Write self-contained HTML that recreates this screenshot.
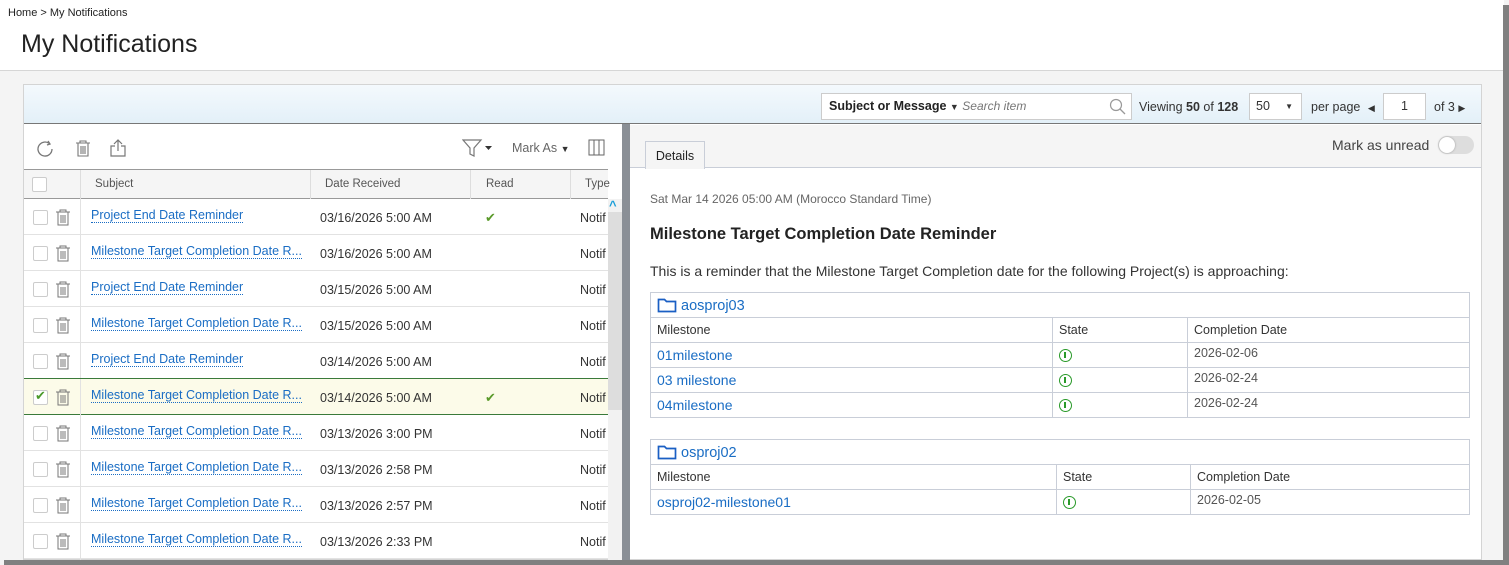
<!DOCTYPE html>
<html><head><meta charset="utf-8"><style>
*{box-sizing:border-box;margin:0;padding:0}
body{width:1509px;height:565px;overflow:hidden;background:#f4f4f4;font-family:"Liberation Sans",sans-serif;color:#333;position:relative}
.a{position:absolute}
.lk{color:#1a6dc4}
.sub{color:#1a6dc4;font-size:12.5px;border-bottom:1px dotted #1a6dc4;line-height:14px;white-space:nowrap}
.cb{width:15px;height:15px;border:1px solid #ccc;border-radius:2px;background:#fff}
.row{position:absolute;left:24px;width:584px;height:36px;border-bottom:1px solid #e2e2e2;background:#fff}
.dt{font-size:12.5px;color:#333}
table{border-collapse:collapse;position:absolute;font-size:12.5px}
td{border:1px solid #c9ced8;padding:0 6px;height:25px}
.ok{display:inline-block;width:13px;height:13px;border:1.5px solid #2a9a2a;border-radius:50%;position:relative;vertical-align:middle}
.ok:after{content:"";position:absolute;left:4px;top:2px;width:1.6px;height:6px;background:#2a9a2a}
</style></head><body>
<div class="a" style="left:0;top:0;width:1504px;height:71px;background:#fff;border-bottom:1px solid #d6d6d6"></div>
<div class="a" style="left:8px;top:7px;font-size:11px;color:#222">Home &gt; My Notifications</div>
<div class="a" style="left:21px;top:30px;font-size:25px;color:#222">My Notifications</div>
<div class="a" style="left:1503px;top:5px;width:6px;height:560px;background:#808080"></div>
<div class="a" style="left:4px;top:560px;width:1505px;height:5px;background:#808080"></div>
<div class="a" style="left:23px;top:84px;width:1459px;height:476px;border:1px solid #d4d4d4;background:#fff"></div>
<div class="a" style="left:24px;top:85px;width:1457px;height:39px;background:linear-gradient(#f4f9fd,#e3f0f8);border-bottom:1px solid #777"></div>
<div class="a" style="left:821px;top:93px;width:311px;height:27px;border:1px solid #ccc;background:#fff;font-size:12.5px;line-height:25px;padding-left:7px"><b style="font-weight:bold;color:#222">Subject or Message</b> <span style="font-size:9px">▼</span> <i style="color:#777;font-size:12px">Search item</i>
<svg class="a" style="right:4px;top:4px" width="18" height="18"><circle cx="7" cy="7" r="5.5" fill="none" stroke="#999" stroke-width="1.2"/><line x1="11" y1="11" x2="16" y2="16" stroke="#999" stroke-width="1.3"/></svg></div>
<div class="a" style="left:1139px;top:100px;font-size:12.5px">Viewing <b>50</b> of <b>128</b></div>
<div class="a" style="left:1249px;top:93px;width:53px;height:27px;border:1px solid #ccc;background:#fff;font-size:12.5px;line-height:25px;padding-left:6px">50<span class="a" style="right:8px;top:0;font-size:8px">▼</span></div>
<div class="a" style="left:1311px;top:100px;font-size:12.5px">per page <span style="font-size:9px;margin-left:4px">◀</span></div>
<div class="a" style="left:1383px;top:93px;width:43px;height:27px;border:1px solid #ccc;background:#fff;font-size:12.5px;line-height:25px;text-align:center">1</div>
<div class="a" style="left:1434px;top:100px;font-size:12.5px">of 3 <span style="font-size:9px">▶</span></div>
<svg class="a" style="left:35px;top:138px" width="22" height="22"><path d="M17 11a7 7 0 1 1-3-5.7" fill="none" stroke="#777" stroke-width="1.3"/><path d="M13 3l2 3-3 1" fill="none" stroke="#777" stroke-width="1.3"/></svg>
<svg class="a" style="left:74px;top:138px" width="18" height="20"><path d="M2 5h14M6 5V3h6v2M4 5v13h10V5M7 8v8M9 8v8M11 8v8" fill="none" stroke="#777" stroke-width="1.1"/></svg>
<svg class="a" style="left:108px;top:137px" width="20" height="22"><path d="M7 9H3v10h14V9h-4M10 14V3M6 7l4-4 4 4" fill="none" stroke="#777" stroke-width="1.2"/></svg>
<svg class="a" style="left:462px;top:138px" width="34" height="20"><path d="M1 2h18l-7 8v8l-4-2v-6z" fill="none" stroke="#777" stroke-width="1.2"/><path d="M23 8h7l-3.5 4z" fill="#333"/></svg>
<div class="a" style="left:512px;top:141px;font-size:12.5px;color:#666">Mark As <span style="font-size:9px;color:#333">▼</span></div>
<svg class="a" style="left:588px;top:139px" width="18" height="18"><rect x="1" y="1" width="15" height="15" fill="none" stroke="#666"/><path d="M6 1v15M11 1v15" stroke="#666"/></svg>
<div class="a" style="left:24px;top:169px;width:584px;height:30px;background:#f5f5f5;border-top:1px solid #999;border-bottom:1px solid #999;font-size:11.5px;color:#555">
<div class="cb a" style="left:8px;top:7px"></div>
<div class="a" style="left:56px;top:0;height:29px;border-left:1px solid #ddd"></div>
<div class="a" style="left:71px;top:8px">Subject</div>
<div class="a" style="left:286px;top:0;height:29px;border-left:1px solid #ddd"></div>
<div class="a" style="left:301px;top:8px">Date Received</div>
<div class="a" style="left:446px;top:0;height:29px;border-left:1px solid #ddd"></div>
<div class="a" style="left:462px;top:8px">Read</div>
<div class="a" style="left:546px;top:0;height:29px;border-left:1px solid #ddd"></div>
<div class="a" style="left:561px;top:8px">Type</div>
</div>
<div class="a" style="left:608px;top:199px;width:14px;height:361px;background:#f2f2f2"></div>
<div class="a" style="left:608px;top:212px;width:14px;height:198px;background:#ddd"></div>
<div class="a" style="left:609px;top:198px;font-size:13px;color:#1a9ed8;font-weight:bold">^</div>
<div class="a" style="left:622px;top:124px;width:8px;height:436px;background:#8a8f96"></div>
<div class="a" style="left:80px;top:199px;width:1px;height:361px;background:#e2e2e2"></div>
<div id="rows"></div>
<div class="a" style="left:630px;top:125px;width:851px;height:43px;background:#f5f5f5;border-bottom:1px solid #c9ced8"></div>
<div class="a" style="left:645px;top:141px;width:60px;height:28px;background:#f5f5f5;border:1px solid #c9ced8;border-bottom:none;font-size:12.5px;line-height:28px;text-align:center;color:#222">Details</div>
<div class="a" style="left:1332px;top:137px;font-size:14px;color:#444">Mark as unread</div>
<div class="a" style="left:1438px;top:136px;width:36px;height:18px;border-radius:9px;background:#ddd"><div class="a" style="left:1px;top:1px;width:16px;height:16px;border-radius:50%;background:#fff;box-shadow:0 0 2px #999"></div></div>
<div class="a" style="left:650px;top:192px;font-size:12px;color:#666">Sat Mar 14 2026 05:00 AM (Morocco Standard Time)</div>
<div class="a" style="left:650px;top:225px;font-size:16.5px;font-weight:bold;color:#222">Milestone Target Completion Date Reminder</div>
<div class="a" style="left:650px;top:263px;font-size:14px;color:#333">This is a reminder that the Milestone Target Completion date for the following Project(s) is approaching:</div>
<table style="left:650px;top:292px;width:820px">
<tr><td colspan="3" style="font-size:14.5px"><svg width="20" height="16" style="vertical-align:-3px;margin-right:4px"><path d="M1.5 2.5h6l2 2h9v10h-17z" fill="none" stroke="#1a5fc4" stroke-width="1.7"/></svg><span class="lk">aosproj03</span></td></tr>
<tr><td style="width:402px">Milestone</td><td style="width:135px">State</td><td>Completion Date</td></tr>
<tr><td class="lk" style="font-size:14px">01milestone</td><td><span class="ok"></span></td><td style="color:#555;vertical-align:top;padding-top:3px">2026-02-06</td></tr>
<tr><td class="lk" style="font-size:14px">03 milestone</td><td><span class="ok"></span></td><td style="color:#555;vertical-align:top;padding-top:3px">2026-02-24</td></tr>
<tr><td class="lk" style="font-size:14px">04milestone</td><td><span class="ok"></span></td><td style="color:#555;vertical-align:top;padding-top:3px">2026-02-24</td></tr>
</table>
<table style="left:650px;top:439px;width:820px">
<tr><td colspan="3" style="font-size:14.5px"><svg width="20" height="16" style="vertical-align:-3px;margin-right:4px"><path d="M1.5 2.5h6l2 2h9v10h-17z" fill="none" stroke="#1a5fc4" stroke-width="1.7"/></svg><span class="lk">osproj02</span></td></tr>
<tr><td style="width:406px">Milestone</td><td style="width:134px">State</td><td>Completion Date</td></tr>
<tr><td class="lk" style="font-size:14px">osproj02-milestone01</td><td><span class="ok"></span></td><td style="color:#555;vertical-align:top;padding-top:3px">2026-02-05</td></tr>
</table>
<script>
var d=[["Project End Date Reminder","03/16/2026 5:00 AM",1],["Milestone Target Completion Date R...","03/16/2026 5:00 AM",0],["Project End Date Reminder","03/15/2026 5:00 AM",0],["Milestone Target Completion Date R...","03/15/2026 5:00 AM",0],["Project End Date Reminder","03/14/2026 5:00 AM",0],["Milestone Target Completion Date R...","03/14/2026 5:00 AM",2],["Milestone Target Completion Date R...","03/13/2026 3:00 PM",0],["Milestone Target Completion Date R...","03/13/2026 2:58 PM",0],["Milestone Target Completion Date R...","03/13/2026 2:57 PM",0],["Milestone Target Completion Date R...","03/13/2026 2:33 PM",0]];
var h="";d.forEach(function(r,i){var t=199+i*36;var sel=r[2]==2;
h+='<div class="row" style="top:'+t+'px;'+(sel?'background:#fcfbe9;border-top:1px solid #3a7a3a;border-bottom:1px solid #3a7a3a;top:'+(t-1)+'px;height:37px':'')+'">'+
'<div class="cb a" style="left:9px;top:11px">'+(sel?'<span style="position:absolute;left:1px;top:-3px;color:#4a9a2a;font-size:13px">✔</span>':'')+'</div>'+
'<svg class="a" style="left:31px;top:9px" width="16" height="18"><path d="M1 4h14M5 4V2h6v2M3 4v13h10V4M6 7v8M8 7v8M10 7v8" fill="none" stroke="#777" stroke-width="1"/></svg>'+
'<div class="a" style="left:56px;top:0;width:1px;height:36px;background:#e2e2e2"></div>'+
'<div class="a sub" style="left:67px;top:9px">'+r[0]+'</div>'+
'<div class="a dt" style="left:296px;top:12px">'+r[1]+'</div>'+
(r[2]?'<div class="a" style="left:461px;top:11px;color:#5a9a2a;font-size:13px">✔</div>':'')+
'<div class="a dt" style="left:556px;top:12px;width:28px;overflow:hidden">Notif</div></div>';});
document.getElementById("rows").innerHTML=h;
</script>
</body></html>
